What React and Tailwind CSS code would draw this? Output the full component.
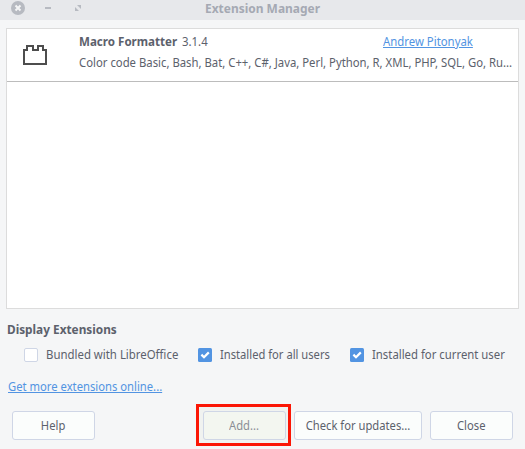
function Check({ checked }) {
  return checked ? (
    <svg className="block shrink-0" width="14" height="14" viewBox="0 0 14 14">
      <rect width="14" height="14" rx="1.5" fill="#5294e2" />
      <path d="M3.4 6.6 L6 9.2 L10.8 4.4" fill="none" stroke="#fff" strokeWidth="2.2" />
    </svg>
  ) : (
    <span className="block h-[14px] w-[14px] shrink-0 rounded-[2px] border border-[#cfd6e6] bg-white" />
  );
}

function Button({ className, children }) {
  return (
    <button className={`flex h-[29px] shrink-0 items-center justify-center rounded-[3px] border border-[#cfd6e6] pt-px ${className}`}>
      <span className="block scale-x-[0.935]">{children}</span>
    </button>
  );
}

export default function App() {
  return (
    <div className="flex h-[449px] w-[525px] flex-col overflow-hidden whitespace-nowrap bg-[#f5f6f7] font-['Noto_Sans',sans-serif] text-[12px] leading-[16px] text-[#5c616c]">
      <header className="flex h-5 shrink-0 items-start bg-[#e7e8eb]">
        <svg className="block shrink-0" width="205" height="20" viewBox="0 0 205 20">
          <circle cx="18" cy="8" r="7" fill="#b7bac1" />
          <path d="M15.5 5.5 L20.5 10.5 M20.5 5.5 L15.5 10.5" stroke="#f4f5f6" strokeWidth="2" />
          <rect x="45" y="7" width="6" height="2" fill="#b7bac1" />
          <path d="M77 5 H81 V9 Z M75 7 V11 H79 Z" fill="#b7bac1" />
        </svg>
        <h1 className="origin-left scale-x-[0.996] text-[12px] font-bold leading-[17px] text-[#a5a9b3]">Extension Manager</h1>
      </header>

      <main className="mx-[6px] mt-2 h-[281px] w-[513px] shrink-0 border border-[#dcdcdc] bg-white">
        <article className="flex h-[53px] border-b border-[#bcbcbc]">
          <svg className="ml-4 mt-4 block shrink-0" width="24" height="20" viewBox="0 0 24 20">
            <path d="M1 19 V5 H4 V1 H10 V5 H15 V1 H20 V5 H23 V19 Z" fill="none" stroke="#4d4d4d" strokeWidth="2" />
          </svg>
          <div className="ml-8 w-[434px] pt-[5px]">
            <div className="flex">
              <strong className="origin-left scale-x-[0.965]">Macro Formatter</strong>
              <span className="ml-px origin-left scale-x-[0.95]">3.1.4</span>
              <a className="ml-auto mr-10 origin-right scale-x-[0.947] text-[#5294e2] underline underline-offset-1">Andrew Pitonyak</a>
            </div>
            <p className="mt-[5px] w-max origin-left scale-x-[0.943]">Color code Basic, Bash, Bat, C++, C#, Java, Perl, Python, R, XML, PHP, SQL, Go, Ru...</p>
          </div>
        </article>
      </main>

      <h2 className="ml-[7px] mt-[13px] shrink-0 origin-left self-start scale-x-[0.985] text-[12px] font-bold leading-[16px]">Display Extensions</h2>
      <div className="mt-[9px] flex h-4 shrink-0 items-center pl-6">
        <label className="flex w-[174px] items-center gap-2"><Check /><span className="origin-left scale-x-[0.95]">Bundled with LibreOffice</span></label>
        <label className="flex w-[152px] items-center gap-2"><Check checked /><span className="origin-left scale-x-[0.932]">Installed for all users</span></label>
        <label className="flex items-center gap-2"><Check checked /><span className="origin-left scale-x-[0.945]">Installed for current user</span></label>
      </div>
      <a className="ml-2 mt-4 shrink-0 origin-left scale-x-[0.937] self-start text-[#5294e2] underline underline-offset-1">Get more extensions online...</a>
      <footer className="mt-[9px] flex h-[42px] shrink-0 items-center pl-3">
        <Button className="w-[83px] bg-[#fbfdfc]">Help</Button>
        <div className="ml-[101px] flex h-[42px] w-[95px] items-center border-[3px] border-[#fb1605] bg-[#f0f2f0] pl-1">
          <Button className="w-[83px] bg-[#f3f6f0] text-[#8b8e95]">Add...</Button>
        </div>
        <Button className="ml-[3px] w-[128px] bg-[#fbfdfc]">Check for updates...</Button>
        <Button className="ml-2 w-[83px] bg-[#fbfdfc]">Close</Button>
      </footer>
    </div>
  );
}
